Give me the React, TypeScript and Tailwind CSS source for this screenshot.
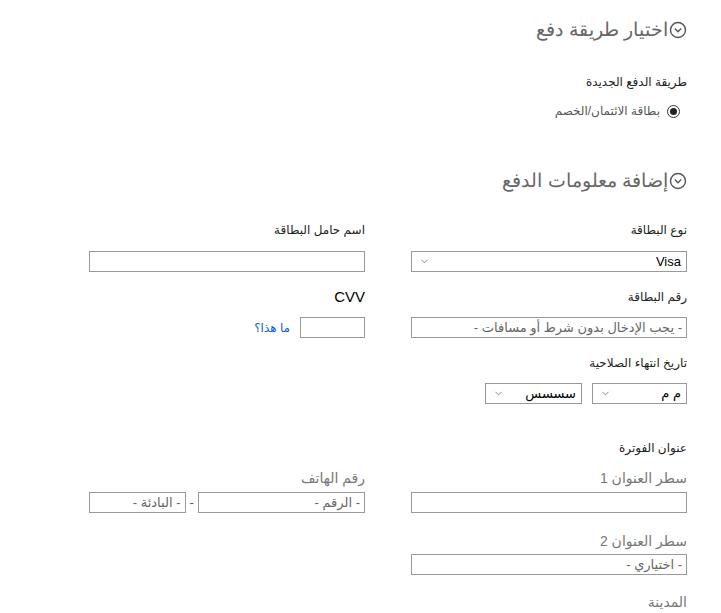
import { ChevronDown } from "lucide-react";

const font = "font-['Liberation_Sans','DejaVu_Sans',sans-serif]";

function CircleChevron() {
  return (
    <svg width="18" height="18" viewBox="0 0 18 18" className="shrink-0">
      <circle cx="9" cy="9" r="7.5" fill="none" stroke="#555" strokeWidth="1.4" />
      <path d="M5.8 7.6 L9 10.8 L12.2 7.6" fill="none" stroke="#555" strokeWidth="1.4" />
    </svg>
  );
}

function Heading({ children }: { children: React.ReactNode }) {
  return (
    <h2 className="flex h-[26px] items-center gap-[1px] text-[19px] font-extralight text-[#666]">
      <CircleChevron />
      <span>{children}</span>
    </h2>
  );
}

function Label({ children, gray }: { children: React.ReactNode; gray?: boolean }) {
  return gray ? (
    <div className="flex h-[20px] items-center text-[14px] text-[#777]">{children}</div>
  ) : (
    <div className="flex h-[20px] items-center text-[12px] text-[#222]">{children}</div>
  );
}

function Field({ placeholder, className = "w-full" }: { placeholder?: string; className?: string }) {
  return (
    <div
      className={`flex h-[21px] items-center border border-[#999] bg-white px-[4px] text-[13px] text-[#666] ${className}`}
    >
      {placeholder}
    </div>
  );
}

function Select({ value, className }: { value: string; className: string }) {
  return (
    <div
      className={`flex h-[21px] items-center justify-between whitespace-nowrap border border-[#999] bg-white pr-[5px] pl-[7px] text-[13px] text-black ${className}`}
    >
      <span>{value}</span>
      <ChevronDown size={11} strokeWidth={1.5} className="text-[#555]" />
    </div>
  );
}

export default function App() {
  return (
    <div dir="rtl" className={`min-h-[613px] w-[721px] bg-white pr-[34px] ${font}`}>
      <div className="pt-[17px]">
        <Heading>اختيار طريقة دفع</Heading>
      </div>

      <div className="mt-[29px]">
        <Label>طريقة الدفع الجديدة</Label>
      </div>
      <div className="mt-[9px] flex h-[20px] items-center gap-[7px] pr-[7px]">
        <span className="flex h-[13px] w-[13px] items-center justify-center rounded-full border border-[#333]">
          <span className="h-[7px] w-[7px] rounded-full bg-[#222]" />
        </span>
        <span className="text-[12px] text-[#555]">بطاقة الائتمان/الخصم</span>
      </div>

      <div className="mt-[47px]">
        <Heading>إضافة معلومات الدفع</Heading>
      </div>

      <div className="mt-[26px] flex gap-[46px]">
        {/* right column */}
        <div className="flex w-[276px] flex-col">
          <Label>نوع البطاقة</Label>
          <Select value="Visa" className="mt-[11px] w-full" />

          <div className="mt-[15px]">
            <Label>رقم البطاقة</Label>
          </div>
          <Field className="mt-[10px] w-full" placeholder="- يجب الإدخال بدون شرط أو مسافات -" />

          <div className="mt-[15px]">
            <Label>تاريخ انتهاء الصلاحية</Label>
          </div>
          <div className="mt-[10px] flex gap-[10px]">
            <Select value="م م" className="w-[95px]" />
            <Select value="سسسس" className="w-[97px]" />
          </div>

          <div className="mt-[34px]">
            <Label>عنوان الفوترة</Label>
          </div>
          <div className="mt-[10px]">
            <Label gray>سطر العنوان 1</Label>
          </div>
          <Field className="mt-[4px] w-full" />

          <div className="mt-[18px]">
            <Label gray>سطر العنوان 2</Label>
          </div>
          <Field className="mt-[3px] w-full" placeholder="- اختياري -" />

          <div className="mt-[17px]">
            <Label gray>المدينة</Label>
          </div>
        </div>

        {/* left column */}
        <div className="flex w-[276px] flex-col">
          <Label>اسم حامل البطاقة</Label>
          <Field className="mt-[11px] w-full" />

          <div className="mt-[15px] flex h-[20px] items-center text-[15px] text-black">CVV</div>
          <div className="mt-[10px] flex items-center gap-[10px]">
            <Field className="w-[65px]" />
            <a href="#" className="text-[12px] text-[#0b5cd5]">
              ما هذا؟
            </a>
          </div>

          <div className="mt-[130px]">
            <Label gray>رقم الهاتف</Label>
          </div>
          <div className="mt-[4px] flex items-center gap-[4px]">
            <Field className="w-[168px]" placeholder="- الرقم -" />
            <span className="text-[13px] text-[#555]">-</span>
            <Field className="w-[97px]" placeholder="- البادئة -" />
          </div>
        </div>
      </div>
    </div>
  );
}
